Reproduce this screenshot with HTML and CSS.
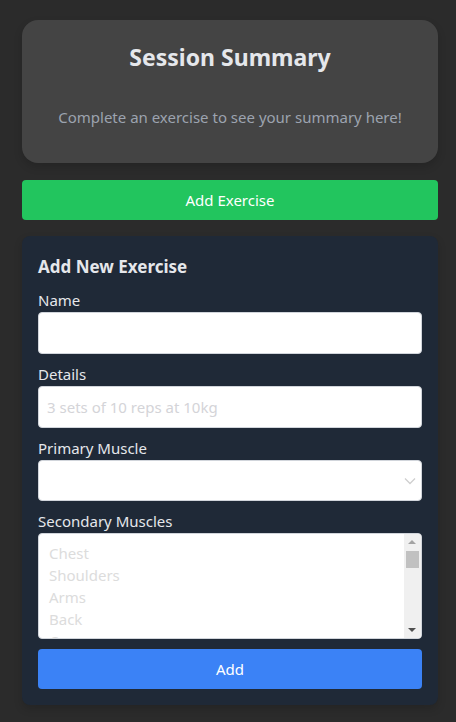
FILE: index.html
```html
<!DOCTYPE html>
<html lang="en">
<head>
<meta charset="utf-8">
<title>Workout</title>
<link rel="stylesheet" href="styles.css">
</head>
<body>
<main class="app">
  <section class="summary">
    <h1 class="summary-title">Session Summary</h1>
    <p class="summary-text">Complete an exercise to see your summary here!</p>
  </section>
  <button class="btn btn-green" type="button">Add Exercise</button>
  <form class="form-card">
    <h2 class="form-title">Add New Exercise</h2>
    <label class="label" for="name">Name</label>
    <input class="input" id="name" type="text">
    <label class="label" for="details">Details</label>
    <input class="input" id="details" type="text" placeholder="3 sets of 10 reps at 10kg">
    <label class="label" for="primary">Primary Muscle</label>
    <div class="select-wrap">
      <select class="input select" id="primary"><option></option></select>
      <svg class="chev" width="12" height="8" viewBox="0 0 12 8"><path d="M1 1.5 6 6.5 11 1.5" fill="none" stroke="#cfcfcf" stroke-width="1.3"/></svg>
    </div>
    <label class="label" for="secondary">Secondary Muscles</label>
    <div class="multi">
      <ul class="multi-list">
        <li>Chest</li>
        <li>Shoulders</li>
        <li>Arms</li>
        <li>Back</li>
        <li>Core</li>
      </ul>
      <div class="scrollbar">
        <span class="arrow up"></span>
        <span class="thumb"></span>
        <span class="arrow down"></span>
      </div>
    </div>
    <button class="btn btn-blue" type="button">Add</button>
  </form>
</main>
</body>
</html>
```
FILE: styles.css
```css
* { box-sizing: border-box; }
html, body { margin: 0; padding: 0; }
body {
  background: #2b2b2b;
  font-family: "Noto Sans", "Open Sans", sans-serif;
  color: #e5e7eb;
  height: 722px;
  overflow: hidden;
}
.app {
  width: 416px;
  margin: 20px 0 0 22px;
  display: flex;
  flex-direction: column;
}
.summary {
  background: #444444;
  border-radius: 16px;
  height: 143px;
  padding: 21px 16px 0;
  text-align: center;
  box-shadow: 0 4px 8px rgba(0,0,0,0.15);
}
.summary-title {
  margin: 0;
  font-size: 23px;
  line-height: 32px;
  font-weight: 700;
  color: #e5e7eb;
}
.summary-text {
  margin: 32px 0 0;
  font-size: 15px;
  line-height: 24px;
  color: #9ca3af;
}
.btn {
  border: 0;
  border-radius: 4px;
  height: 40px;
  width: 100%;
  color: #ffffff;
  font-family: inherit;
  font-size: 15px;
  padding: 0;
}
.btn-green { background: #22c55e; margin-top: 17px; }
.btn-blue { background: #3b82f6; margin-top: 10px; }
.form-card {
  margin: 16px 0 0;
  background: #1f2937;
  border-radius: 8px;
  padding: 16px 16px 16px;
  display: flex;
  flex-direction: column;
  box-shadow: 0 4px 8px rgba(0,0,0,0.15);
}
.form-title {
  margin: 1px 0 7px;
  font-size: 17px;
  line-height: 28px;
  font-weight: 700;
  color: #e5e7eb;
}
.label {
  font-size: 15px;
  line-height: 24px;
  color: #e5e7eb;
}
.input {
  display: block;
  width: 100%;
  height: 42px;
  border: 1px solid #d1d5db;
  border-radius: 4px;
  background: #ffffff;
  padding: 8px;
  font-family: inherit;
  font-size: 15px;
  color: #111;
  margin-bottom: 8px;
  outline: none;
}
.input::placeholder { color: #d4d4d8; }
.select-wrap { position: relative; }
.select {
  appearance: none;
  -webkit-appearance: none;
  height: 41px;
}
.chev { position: absolute; right: 6px; top: 17px; }
.multi {
  height: 106px;
  background: #ffffff;
  border: 1px solid #d1d5db;
  border-radius: 4px;
  display: flex;
  overflow: hidden;
}
.multi-list {
  list-style: none;
  margin: 0;
  padding: 8px 10px;
  flex: 1;
  font-size: 15px;
  line-height: 22px;
  color: #dcdcdc;
  overflow: hidden;
}
.scrollbar {
  width: 17px;
  background: #f0f0f0;
  position: relative;
  flex: none;
}
.thumb {
  position: absolute;
  left: 2px;
  top: 17px;
  width: 13px;
  height: 17px;
  background: #c1c1c1;
}
.arrow {
  position: absolute;
  left: 4px;
  width: 0;
  height: 0;
  border-left: 4px solid transparent;
  border-right: 4px solid transparent;
}
.arrow.up { top: 6px; border-bottom: 4px solid #a3a3a3; }
.arrow.down { bottom: 6px; border-top: 4px solid #505050; }
```
